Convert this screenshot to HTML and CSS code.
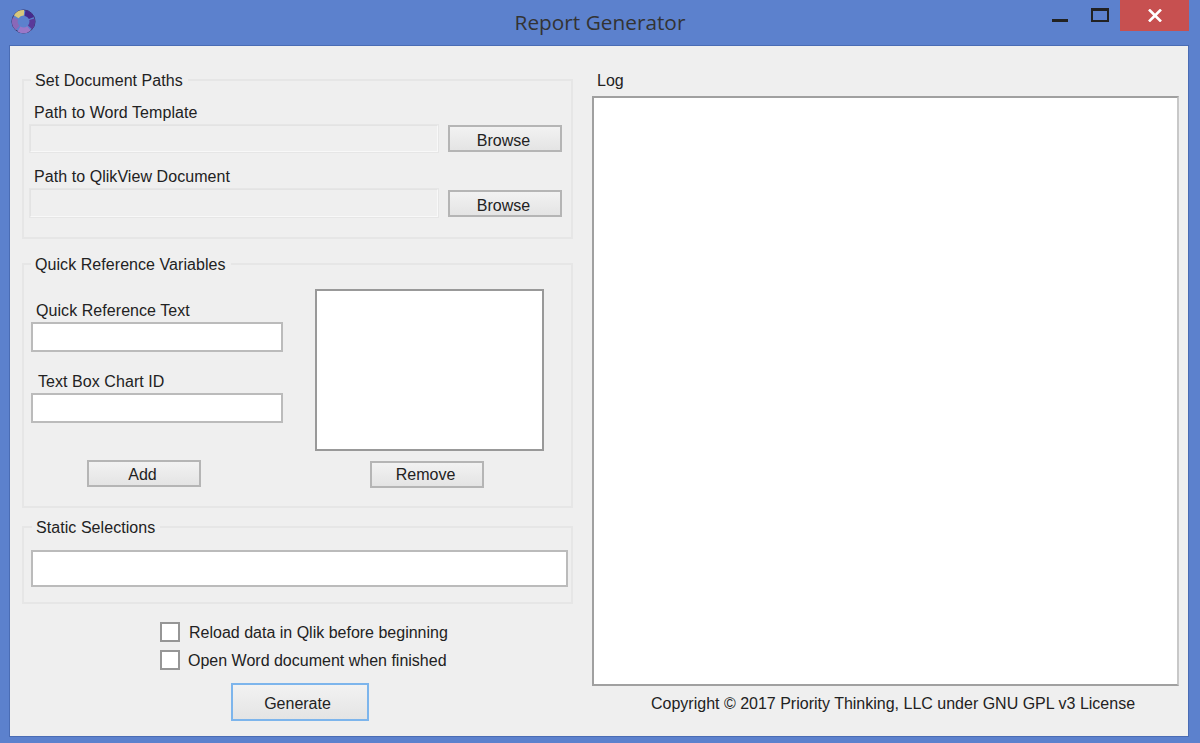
FILE: index.html
```html
<!DOCTYPE html>
<html lang="en">

<head>
    <meta charset="UTF-8">
    <title>Report Generator</title>
    <link rel="stylesheet" href="styles.css">
</head>

<body>
    <header class="titlebar">
        <svg class="app-icon" width="25" height="25" viewBox="0 0 25 25">
            <circle cx="12.5" cy="12.5" r="11.6" fill="none" stroke="#3d3a70" stroke-width="1"/>
            <g fill="none" stroke-width="5.6">
                <path d="M5.2 7.8A8.7 8.7 0 0 1 13 3.8" stroke="#d8c87c"/>
                <path d="M14 3.9A8.7 8.7 0 0 1 20.5 9" stroke="#46298c"/>
                <path d="M20.9 10.2A8.7 8.7 0 0 1 19 18.3" stroke="#5a3a9a"/>
                <path d="M18 19.3A8.7 8.7 0 0 1 8 20" stroke="#9a78c8"/>
                <path d="M6.7 18.9A8.7 8.7 0 0 1 4.4 9.5" stroke="#8a68b8"/>
            </g>
        </svg>
        <h1 class="title">Report Generator</h1>
        <div class="controls">
            <span class="minimize"></span>
            <span class="maximize"></span>
            <span class="close">
                <svg width="14" height="13" viewBox="0 0 14 13">
                    <path d="M1 0.5L13 12.5M13 0.5L1 12.5" stroke="#fff" stroke-width="2.6"/>
                </svg>
            </span>
        </div>
    </header>

    <main class="client">
        <div class="left">
            <fieldset class="group group-paths">
                <legend>Set Document Paths</legend>
                <label class="field-label path-label">Path to Word Template</label>
                <div class="path-row">
                    <input type="text" class="path-input path-first" disabled>
                    <button class="btn browse">Browse</button>
                </div>
                <label class="field-label path-label second">Path to QlikView Document</label>
                <div class="path-row">
                    <input type="text" class="path-input" disabled>
                    <button class="btn browse">Browse</button>
                </div>
            </fieldset>

            <fieldset class="group group-refs">
                <legend>Quick Reference Variables</legend>
                <div class="refs-left">
                    <label class="field-label ref-text">Quick Reference Text</label>
                    <input type="text" class="text-input">
                    <label class="field-label ref-chart">Text Box Chart ID</label>
                    <input type="text" class="text-input">
                    <button class="btn add">Add</button>
                </div>
                <div class="refs-right">
                    <div class="listbox"></div>
                    <button class="btn remove">Remove</button>
                </div>
            </fieldset>

            <fieldset class="group group-static">
                <legend>Static Selections</legend>
                <input type="text" class="static-input">
            </fieldset>

            <div class="options">
                <label class="option"><input type="checkbox"><span>Reload data in Qlik before beginning</span></label>
                <label class="option second-option"><input type="checkbox"><span>Open Word document when finished</span></label>
            </div>
            <button class="btn generate">Generate</button>
        </div>

        <div class="right">
            <div class="log-label">Log</div>
            <div class="log"></div>
            <div class="copyright">Copyright © 2017 Priority Thinking, LLC under GNU GPL v3 License</div>
        </div>
    </main>
</body>

</html>
```

FILE: styles.css
```css
* {
    box-sizing: border-box;
}

html,
body {
    height: 100%;
}

body {
    margin: 0;
    overflow: hidden;
    background-color: #5c81cd;
    font-family: "Liberation Sans", Arial, sans-serif;
    font-size: 16px;
    line-height: 20px;
    color: #222;
}

/* title bar */
.titlebar {
    display: grid;
    grid-template-columns: 1fr auto 1fr;
    height: 45px;
}

.app-icon {
    margin: 9px 0 0 11px;
}

.title {
    margin: 8px 0 0;
    font-family: "Open Sans", sans-serif;
    font-size: 20.8px;
    font-weight: 400;
    line-height: 28px;
    color: #333;
}

.controls {
    display: flex;
    justify-content: flex-end;
    align-items: flex-start;
    padding-right: 11px;
}

.minimize {
    width: 16px;
    height: 3px;
    margin-top: 19px;
    background-color: #222;
}

.maximize {
    width: 18px;
    height: 14px;
    margin: 8px 11px 0 23px;
    border: 2px solid #222;
    border-top-width: 3px;
}

.close {
    display: flex;
    justify-content: center;
    align-items: center;
    width: 69px;
    height: 31px;
    background-color: #c75050;
}

/* client area */
.client {
    display: flex;
    width: 1180px;
    height: 692px;
    margin-left: 9px;
    padding: 24px 0 0 12px;
    background-color: #efefef;
    border: 1px solid #4a6cb4;
}

.left {
    width: 551px;
}

.right {
    width: 587px;
    margin-left: 19px;
}

/* group boxes */
.group {
    margin: 0;
    min-width: 0;
    border: 2px solid #e6e6e6;
}

.group legend {
    padding: 2px 5px 0 4px;
    line-height: 18px;
    letter-spacing: 0.06px;
}

.group-paths legend {
    margin-left: 2px;
}

.group-static legend {
    margin-left: 1px;
}

.group-paths {
    padding: 12px 9px 19px 5px;
}

.group-refs {
    display: flex;
    margin-top: 15px;
    padding: 15px 0 18px 7px;
}

.group-static {
    margin-top: 9px;
    padding: 13px 3px 15px 7px;
}

.field-label {
    display: block;
    margin-bottom: 1px;
    padding-top: 1px;
    letter-spacing: 0.06px;
}

.path-label {
    padding-left: 5px;
}

.second {
    margin-top: 13px;
}

.path-row {
    display: flex;
    align-items: center;
    gap: 9px;
}

.path-input {
    width: 410px;
    height: 30px;
    background-color: #efefef;
    border: 2px solid;
    border-color: #e3e3e3 #f8f8f8 #f8f8f8 #e3e3e3;
    outline: 1px solid #e6e6e6;
    outline-offset: -1px;
}

.path-first {
    height: 29px;
}

.text-input {
    display: block;
    width: 252px;
    height: 30px;
    background-color: #fff;
    border: 2px solid #bbb;
}

.static-input {
    display: block;
    width: 537px;
    height: 37px;
    background-color: #fff;
    border: 2px solid #bbb;
}

.refs-left {
    width: 284px;
    padding-top: 11px;
}

.ref-text {
    padding-left: 5px;
}

.ref-chart {
    margin-top: 19px;
    padding-left: 7px;
}

.listbox {
    width: 229px;
    height: 162px;
    background-color: #fff;
    border: 2px solid #999;
}

/* buttons */
.btn {
    display: block;
    width: 114px;
    height: 27px;
    padding: 0 3px 0 0;
    font: inherit;
    color: #222;
    background: linear-gradient(#f2f2f2, #e4e4e4);
    border: 2px solid #b5b5b5;
}

.browse {
    padding-top: 4px;
}

.add {
    margin: 37px 0 0 56px;
    padding-top: 2px;
}

.remove {
    margin: 10px 0 0 55px;
    padding-top: 1px;
}

.generate {
    width: 138px;
    height: 38px;
    margin: 9px 0 0 209px;
    padding: 4px 5px 0 0;
    border-color: #7db5ec;
}

/* checkboxes */
.options {
    margin-top: 14px;
    padding-left: 138px;
}

.option {
    display: flex;
    align-items: center;
    height: 28px;
}

.option input {
    appearance: none;
    width: 20px;
    height: 20px;
    margin: 0 9px 0 0;
    background-color: #fff;
    border: 2px solid #969696;
}

.option span {
    padding-top: 2px;
}

.second-option span {
    margin-left: -1px;
}

/* log */
.log-label {
    height: 20px;
    margin: 1px 0 5px 5px;
    line-height: 19px;
}

.log {
    height: 590px;
    background-color: #fff;
    border: 2px solid;
    border-color: #a0a0a0 #c8c8c8 #a0a0a0 #a0a0a0;
}

.copyright {
    margin-top: 7px;
    padding-top: 1px;
    padding-left: 59px;
    white-space: nowrap;
}
```
